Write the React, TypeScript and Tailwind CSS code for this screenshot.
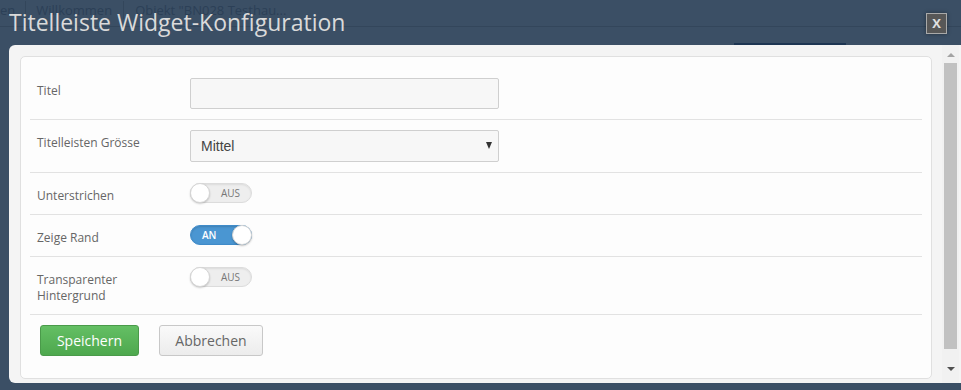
import { useState } from "react";

type ToggleProps = {
  on: boolean;
  onChange: (value: boolean) => void;
};

function Toggle({ on, onChange }: ToggleProps) {
  return (
    <button
      type="button"
      onClick={() => onChange(!on)}
      className={
        on
          ? "relative flex h-[20px] w-[62px] items-center rounded-full border border-[#3f8bc9] bg-[#4a96d2] shadow-[inset_0_1px_2px_rgba(0,0,0,0.15)]"
          : "relative flex h-[20px] w-[62px] items-center rounded-full border border-[#dcdcdc] bg-[#eeeeee] shadow-[inset_0_1px_2px_rgba(0,0,0,0.08)]"
      }
    >
      {on ? (
        <>
          <span className="ml-[11px] text-[10px] font-semibold leading-none text-white">AN</span>
          <span className="absolute right-[-1px] top-[-1px] h-[20px] w-[20px] rounded-full border border-[#d6d6d6] bg-white shadow-[0_1px_2px_rgba(0,0,0,0.25)]" />
        </>
      ) : (
        <>
          <span className="absolute left-[-1px] top-[-1px] h-[20px] w-[20px] rounded-full border border-[#d6d6d6] bg-white shadow-[0_1px_2px_rgba(0,0,0,0.2)]" />
          <span className="ml-auto mr-[11px] text-[10px] leading-none text-[#777]">AUS</span>
        </>
      )}
    </button>
  );
}

function Row({ label, children }: { label: React.ReactNode; children: React.ReactNode }) {
  return (
    <div className="flex border-b border-[#e2e2e2] py-[10px]">
      <div className="w-[160px] shrink-0 pl-[7px] pt-[5px] text-[12px] leading-[16px] text-[#666]">{label}</div>
      <div className="flex">{children}</div>
    </div>
  );
}

function App() {
  const [title, setTitle] = useState("");
  const [size, setSize] = useState("Mittel");
  const [underline, setUnderline] = useState(false);
  const [border, setBorder] = useState(true);
  const [transparent, setTransparent] = useState(false);

  return (
    <div
      className="relative h-[390px] w-[961px] overflow-hidden bg-[#3b4f65]"
      style={{ fontFamily: "'Open Sans', 'Liberation Sans', sans-serif" }}
    >
      {/* page behind the overlay */}
      <div className="absolute inset-0">
        <div className="flex h-[27px] items-start border-b border-[#33465b] pt-[1px] text-[13px] leading-[18px] text-[#2c4057]">
          <span>en</span>
          <span className="mx-[10px] h-[18px] w-px bg-[#33465b]" />
          <span>Willkommen</span>
          <span className="mx-[11px] h-[18px] w-px bg-[#33465b]" />
          <span>Objekt "BN028 Testhau...</span>
        </div>
        <div className="ml-[734px] mt-[16px] h-[3px] w-[112px] bg-[#1d3552]" />
      </div>

      <div className="relative">
        <div className="flex h-[45px] items-start pl-[9px]">
          <h1 className="mt-[6px] text-[23px] leading-[32px] text-[#dadada]">Titelleiste Widget-Konfiguration</h1>
          <button
            type="button"
            className="absolute left-[926px] top-[13px] flex h-[21px] w-[21px] items-center justify-center border border-[#a9a9a9] bg-[#575757] text-[13px] font-bold leading-none text-[#e0e0e0] shadow-[0_0_4px_rgba(0,0,0,0.4)]"
          >
            X
          </button>
        </div>

        <div className="ml-[9px] flex h-[338px] w-[960px] rounded-l-[6px] bg-[#f4f4f4]">
          <div className="pb-[4px] pl-[11px] pt-[11px]">
            <div className="h-[323px] w-[912px] rounded-[5px] border border-[#e0e0e0] bg-[#fdfdfd] px-[9px] pt-[11px]">
              <Row label="Titel">
                <input
                  value={title}
                  onChange={(e) => setTitle(e.target.value)}
                  className="h-[31px] w-[309px] rounded-[2px] border border-[#cfcfcf] bg-[#f7f7f7] px-[10px] text-[14px] outline-none"
                />
              </Row>
              <Row label="Titelleisten Grösse">
                <div className="relative flex">
                  <select
                    value={size}
                    onChange={(e) => setSize(e.target.value)}
                    className="h-[32px] w-[309px] appearance-none rounded-[2px] border border-[#cfcfcf] bg-[#f7f7f7] pl-[10px] text-[14px] text-[#444] outline-none"
                    style={{ fontFamily: "'Liberation Sans', Arial, sans-serif" }}
                  >
                    <option>Klein</option>
                    <option>Mittel</option>
                    <option>Gross</option>
                  </select>
                  <span className="pointer-events-none absolute right-[7px] top-[12px] h-0 w-0 border-x-[3.5px] border-t-[7px] border-x-transparent border-t-[#333]" />
                </div>
              </Row>
              <Row label="Unterstrichen">
                <Toggle on={underline} onChange={setUnderline} />
              </Row>
              <Row label="Zeige Rand">
                <Toggle on={border} onChange={setBorder} />
              </Row>
              <Row
                label={
                  <>
                    Transparenter
                    <br />
                    Hintergrund
                  </>
                }
              >
                <Toggle on={transparent} onChange={setTransparent} />
              </Row>
              <div className="flex gap-[20px] pl-[10px] pt-[10px]">
                <button
                  type="button"
                  className="h-[31px] w-[99px] rounded-[3px] border border-[#4a9a4a] bg-gradient-to-b from-[#64bf64] to-[#4ea84e] text-[14px] text-white"
                >
                  Speichern
                </button>
                <button
                  type="button"
                  className="h-[31px] w-[104px] rounded-[3px] border border-[#c8c8c8] bg-gradient-to-b from-[#fafafa] to-[#ececec] text-[14px] text-[#666]"
                >
                  Abbrechen
                </button>
              </div>
            </div>
          </div>

          {/* scrollbar */}
          <div className="ml-[10px] flex h-full w-[17px] flex-col items-center bg-[#f1f1f1]">
            <span className="mt-[8px] h-0 w-0 border-x-[4px] border-b-[4px] border-x-transparent border-b-[#a3a3a3]" />
            <div className="mt-[6px] h-[286px] w-[13px] bg-[#c1c1c1]" />
            <span className="mt-[18px] h-0 w-0 border-x-[4px] border-t-[4px] border-x-transparent border-t-[#505050]" />
          </div>
        </div>
      </div>
    </div>
  );
}

export default App;
